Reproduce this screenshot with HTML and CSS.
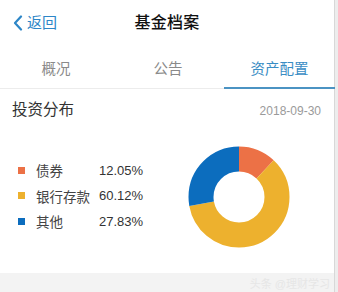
FILE: index.html
```html
<!DOCTYPE html>
<html lang="zh-CN">
<head>
    <meta charset="UTF-8" />
    <meta name="viewport" content="width=device-width, initial-scale=1.0" />
    <title>基金档案</title>
    <link rel="stylesheet" href="styles.css">
</head>
<body>
<div class="page">
    <header class="nav">
        <a class="back" href="#">
            <svg class="chev" width="10" height="16" viewBox="0 0 10 16"><path d="M8 1.5 L2 8 L8 14.5" fill="none" stroke="#2d86c7" stroke-width="2.2" stroke-linecap="round" stroke-linejoin="round"/></svg>
            <span>返回</span>
        </a>
        <h1 class="title">基金档案</h1>
        <span></span>
    </header>

    <nav class="tabs">
        <button class="tab">概况</button>
        <button class="tab">公告</button>
        <button class="tab active">资产配置</button>
    </nav>

    <section class="card">
        <div class="card-head">
            <h2>投资分布</h2>
            <span class="date">2018-09-30</span>
        </div>
        <div class="chart-row">
            <ul class="legend">
                <li><i class="dot bond"></i><span class="name">债券</span><span class="pct">12.05%</span></li>
                <li><i class="dot bank"></i><span class="name">银行存款</span><span class="pct">60.12%</span></li>
                <li><i class="dot other"></i><span class="name">其他</span><span class="pct">27.83%</span></li>
            </ul>
            <svg class="donut" width="102" height="102" viewBox="0 0 102 102">
                <g transform="rotate(-90 51 51)">
                    <circle cx="51" cy="51" r="38" fill="none" stroke="#ec7146" stroke-width="25" pathLength="100" stroke-dasharray="12.05 87.95" stroke-dashoffset="0"/>
                    <circle cx="51" cy="51" r="38" fill="none" stroke="#edb12e" stroke-width="25" pathLength="100" stroke-dasharray="60.12 39.88" stroke-dashoffset="-12.05"/>
                    <circle cx="51" cy="51" r="38" fill="none" stroke="#0c6dbe" stroke-width="25" pathLength="100" stroke-dasharray="27.83 72.17" stroke-dashoffset="-72.17"/>
                </g>
            </svg>
        </div>
    </section>

    <footer class="foot">
        <span class="mark">头条 @理财学习</span>
    </footer>
</div>
</body>
</html>
```

FILE: styles.css
```css
* {
    margin: 0;
    padding: 0;
    box-sizing: border-box;
}
body {
    background-color: #ededed;
    font-family: "Liberation Sans", "Noto Sans CJK SC", sans-serif;
    color: #333;
}
.page {
    width: 335px;
    height: 292px;
    background-color: #fff;
    border-right: 1px solid #d8d8d8;
    display: flex;
    flex-direction: column;
}
.nav {
    height: 46px;
    display: grid;
    grid-template-columns: 1fr auto 1fr;
    align-items: center;
}
.back {
    display: flex;
    align-items: center;
    gap: 4px;
    padding-left: 13px;
    color: #2d86c7;
    text-decoration: none;
    font-size: 15px;
    line-height: 20px;
}
.title {
    font-size: 16px;
    font-weight: 500;
    color: #111;
    line-height: 22px;
    letter-spacing: 0.3px;
}
.tabs {
    height: 43px;
    display: grid;
    grid-template-columns: 112px 112px 111px;
    border-bottom: 1px solid #ececec;
}
.tab {
    border: none;
    background: none;
    font-family: inherit;
    font-size: 14.5px;
    line-height: 20px;
    color: #8a8a8a;
    padding-top: 4px;
    border-bottom: 2px solid transparent;
    margin-bottom: -1px;
}
.tab.active {
    color: #3a8dc4;
    border-bottom-color: #4b93c3;
}
.card {
    flex: 1;
}
.card-head {
    display: flex;
    justify-content: space-between;
    align-items: baseline;
    padding: 10px 13px 0 12px;
}
.card-head h2 {
    font-size: 15.5px;
    font-weight: normal;
    line-height: 22px;
    color: #333;
}
.date {
    font-size: 12px;
    color: #9a9a9a;
}
.chart-row {
    display: flex;
    align-items: center;
    justify-content: space-between;
    padding: 25px 44px 0 18px;
}
.legend {
    list-style: none;
    display: flex;
    flex-direction: column;
    gap: 5.5px;
    margin-bottom: 3px;
}
.legend li {
    display: flex;
    align-items: center;
    height: 20px;
    font-size: 13.5px;
}
.dot {
    width: 7px;
    height: 7px;
    margin-right: 11px;
}
.bond { background-color: #ec7146; }
.bank { background-color: #edb12e; }
.other { background-color: #0c6dbe; }
.name {
    width: 63px;
    color: #444;
}
.pct {
    color: #333;
    font-size: 13px;
}
.foot {
    height: 19px;
    background-color: #f3f3f3;
    display: flex;
    justify-content: flex-end;
    align-items: center;
    padding-right: 4px;
}
.mark {
    font-size: 11px;
    color: #e6e6e6;
}
```
